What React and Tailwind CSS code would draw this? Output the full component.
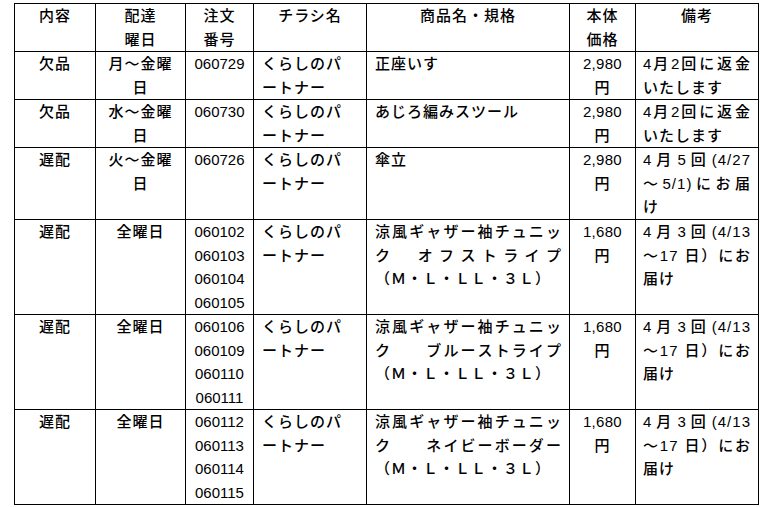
import React from "react";

// Column lines sit at x = 14, 95, 185, 253, 366, 569, 635, 758 in the reference.
const COLS = "grid-cols-[81px_90px_68px_113px_203px_66px_123px]";

const HEAD = [
  ["内容"],
  ["配達", "曜日"],
  ["注文", "番号"],
  ["チラシ名"],
  ["商品名・規格"],
  ["本体", "価格"],
  ["備考"],
];

const SIZES = "（Ｍ・Ｌ・ＬＬ・３Ｌ）";

const ROWS = [
  {
    kind: "欠品",
    day: ["月～金曜", "日"],
    nums: ["060729"],
    item: [{ t: "正座いす" }],
    price: "2,980",
    note: [{ t: "4月2回に返金", j: true }, { t: "いたします" }],
  },
  {
    kind: "欠品",
    day: ["水～金曜", "日"],
    nums: ["060730"],
    item: [{ t: "あじろ編みスツール" }],
    price: "2,980",
    note: [{ t: "4月2回に返金", j: true }, { t: "いたします" }],
  },
  {
    kind: "遅配",
    day: ["火～金曜", "日"],
    nums: ["060726"],
    item: [{ t: "傘立" }],
    price: "2,980",
    note: [
      { t: "4月5回(4/27", j: true },
      { t: "～5/1)にお届", j: true },
      { t: "け" },
    ],
  },
  {
    kind: "遅配",
    day: ["全曜日"],
    nums: ["060102", "060103", "060104", "060105"],
    item: [
      { t: "涼風ギャザー袖チュニッ", j: true },
      { t: "ク　オフストライプ", j: true },
      { t: SIZES },
    ],
    price: "1,680",
    note: [
      { t: "4月3回(4/13", j: true },
      { t: "～17 日）にお", j: true },
      { t: "届け" },
    ],
  },
  {
    kind: "遅配",
    day: ["全曜日"],
    nums: ["060106", "060109", "060110", "060111"],
    item: [
      { t: "涼風ギャザー袖チュニッ", j: true },
      { t: "ク　　ブルーストライプ", j: true },
      { t: SIZES },
    ],
    price: "1,680",
    note: [
      { t: "4月3回(4/13", j: true },
      { t: "～17 日）にお", j: true },
      { t: "届け" },
    ],
  },
  {
    kind: "遅配",
    day: ["全曜日"],
    nums: ["060112", "060113", "060114", "060115"],
    item: [
      { t: "涼風ギャザー袖チュニッ", j: true },
      { t: "ク　　ネイビーボーダー", j: true },
      { t: SIZES },
    ],
    price: "1,680",
    note: [
      { t: "4月3回(4/13", j: true },
      { t: "～17 日）にお", j: true },
      { t: "届け" },
    ],
  },
];

// Word-style distributed line: each CJK char (or run of ASCII, keeping a
// trailing space) is one slot, slots spread edge to edge.
function tokens(text) {
  return text.match(/[\x21-\x7e]+ ?|\S|\u3000/gu) || [];
}

function Cell({ className = "", children }) {
  return (
    <div className={`border-r border-b border-black overflow-hidden ${className}`}>
      {children}
    </div>
  );
}

function Lines({ lines }) {
  return lines.map((line, i) =>
    line.j ? (
      <div key={i} className="flex justify-between whitespace-pre">
        {tokens(line.t).map((tk, k) => (
          <span key={k} className={/^[0-9]$/.test(tk) ? "tracking-normal" : ""}>
            {tk}
          </span>
        ))}
      </div>
    ) : (
      <div key={i} className="whitespace-nowrap">
        {line.t}
      </div>
    )
  );
}

export default function App() {
  return (
    <div className="min-h-screen bg-white pt-[3px] pl-[14px] text-black text-[15px] font-medium leading-[23.5px] tracking-[1px] font-['Liberation_Sans','Noto_Sans_CJK_JP',sans-serif]">
      <div
        className={`grid ${COLS} grid-rows-[48px_48px_48px_72px_95px_95px_95px] w-max border-l border-t border-black`}
      >
        {HEAD.map((h, i) => (
          <Cell key={i} className="text-center">
            {h.map((l) => (
              <div key={l}>{l}</div>
            ))}
          </Cell>
        ))}

        {ROWS.map((r, i) => (
          <React.Fragment key={i}>
            <Cell className="text-center">{r.kind}</Cell>
            <Cell className="text-center">
              {r.day.map((l) => (
                <div key={l}>{l}</div>
              ))}
            </Cell>
            <Cell className="text-center tracking-normal">
              {r.nums.map((n) => (
                <div key={n}>{n}</div>
              ))}
            </Cell>
            <Cell className="pl-[8px]">
              <div>くらしのパ</div>
              <div>ートナー</div>
            </Cell>
            <Cell className="pl-[8px] pr-[7px]">
              <Lines lines={r.item} />
            </Cell>
            <Cell className="text-center">
              <div className="tracking-[0.3px]">{r.price}</div>
              <div>円</div>
            </Cell>
            <Cell className="pl-[7px] pr-[7px]">
              <Lines lines={r.note} />
            </Cell>
          </React.Fragment>
        ))}
      </div>
    </div>
  );
}
